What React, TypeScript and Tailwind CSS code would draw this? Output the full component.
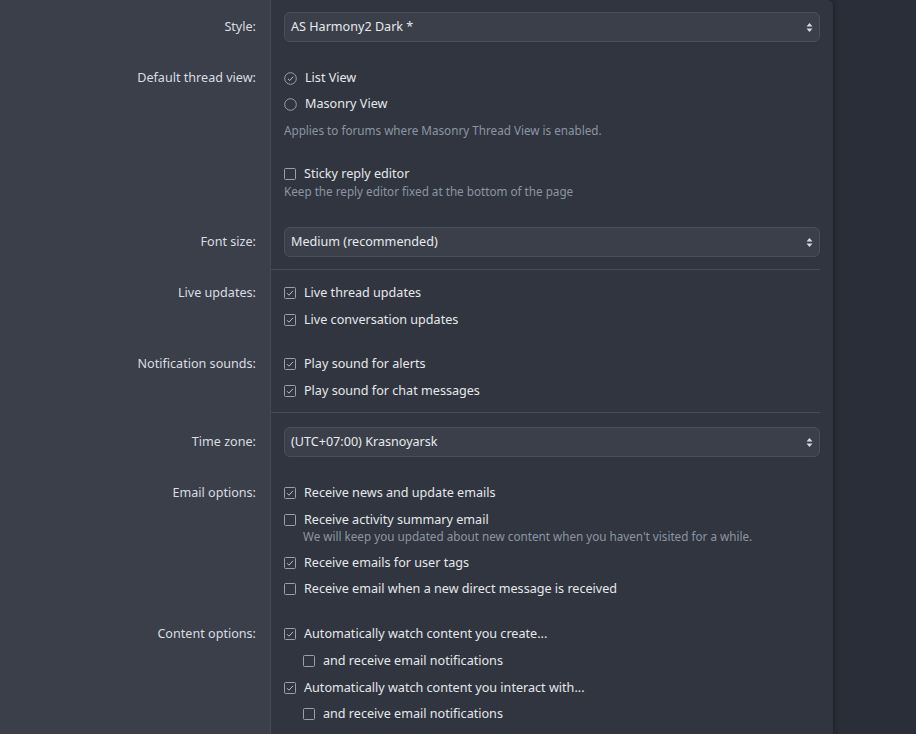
import React from "react";

const font = { fontFamily: '"Noto Sans", "Open Sans", sans-serif' };

function CheckBox({ checked }: { checked: boolean }) {
  return (
    <svg width="12" height="12" viewBox="0 0 12 12" className="shrink-0">
      <rect x="0.5" y="0.5" width="11" height="11" rx="1" fill="none" stroke="#9aa0aa" strokeWidth="1" />
      {checked && <path d="M3 6.2 L5 8.2 L9 3.8" fill="none" stroke="#b8bdc5" strokeWidth="1" />}
    </svg>
  );
}

function Radio({ checked }: { checked: boolean }) {
  return (
    <svg width="13" height="13" viewBox="0 0 13 13" className="shrink-0">
      <circle cx="6.5" cy="6.5" r="5.8" fill="none" stroke="#9aa0aa" strokeWidth="1" />
      {checked && <path d="M3.9 6.7 L5.8 8.5 L9.2 4.7" fill="none" stroke="#b8bdc5" strokeWidth="1" />}
    </svg>
  );
}

function Option({ checked, label, radio, indent }: { checked: boolean; label: string; radio?: boolean; indent?: boolean }) {
  return (
    <div className={"flex items-center h-5 gap-[8px] " + (indent ? "pl-[19px]" : "")}>
      {radio ? <Radio checked={checked} /> : <CheckBox checked={checked} />}
      <span className="text-[12.6px] text-[#e6e8eb]">{label}</span>
    </div>
  );
}

function Hint({ children, className }: { children: React.ReactNode; className?: string }) {
  return <div className={"text-[11.7px] text-[#8d95a3] " + (className || "")}>{children}</div>;
}

function Select({ value }: { value: string }) {
  return (
    <div className="flex items-center justify-between h-[30px] rounded-md border border-[#4a505b] bg-[#3a3f49] pl-[6px] pr-[6px]">
      <span className="text-[12.6px] text-[#e8eaed]">{value}</span>
      <svg width="7" height="11" viewBox="0 0 7 11">
        <path d="M0.5 4.5 L3.5 1 L6.5 4.5 Z" fill="#d8dbe0" />
        <path d="M0.5 6.5 L3.5 10 L6.5 6.5 Z" fill="#d8dbe0" />
      </svg>
    </div>
  );
}

function Row({
  label,
  children,
  pt,
  pb,
  tall,
  sep,
}: {
  label?: string;
  children: React.ReactNode;
  pt: string;
  pb: string;
  tall?: boolean;
  sep?: boolean;
}) {
  return (
    <div className="flex">
      <div className={"w-[271px] shrink-0 bg-[#3a3f49] border-r border-[#444a55] pr-[14px] text-right " + pt}>
        {label && (
          <div className={"text-[12.6px] text-[#dadde2] " + (tall ? "leading-[30px]" : "leading-5")}>{label}</div>
        )}
      </div>
      <div className="flex-1 flex flex-col">
        <div className={"px-[13px] " + pt + " " + pb}>{children}</div>
        {sep && <div className="h-px bg-[#474d58] mr-[13px]" />}
      </div>
    </div>
  );
}

export default function App() {
  return (
    <div className="w-[916px] h-[734px] overflow-hidden bg-[#2a2e38] flex" style={font}>
      <div className="w-[833px] h-full bg-[#30353f] rounded-tr-md shadow-[2px_0_4px_rgba(0,0,0,0.25)] overflow-hidden">
        <Row label="Style:" pt="pt-[12px]" pb="pb-[12px]" tall>
          <Select value="AS Harmony2 Dark *" />
        </Row>
        <Row label="Default thread view:" pt="pt-[14px]" pb="pb-[13px]">
          <div className="flex flex-col gap-[6px]">
            <Option radio checked label="List View" />
            <Option radio checked={false} label="Masonry View" />
          </div>
          <Hint className="mt-[7px] leading-[18px]">Applies to forums where Masonry Thread View is enabled.</Hint>
          <div className="mt-[25px]">
            <Option checked={false} label="Sticky reply editor" />
            <Hint className="leading-[14px] mb-[2px]">Keep the reply editor fixed at the bottom of the page</Hint>
          </div>
        </Row>
        <Row label="Font size:" pt="pt-[14px]" pb="pb-[12px]" tall sep>
          <Select value="Medium (recommended)" />
        </Row>
        <Row label="Live updates:" pt="pt-[13px]" pb="pb-[11px]">
          <div className="flex flex-col gap-[7px]">
            <Option checked label="Live thread updates" />
            <Option checked label="Live conversation updates" />
          </div>
        </Row>
        <Row label="Notification sounds:" pt="pt-[13px]" pb="pb-[11px]" sep>
          <div className="flex flex-col gap-[7px]">
            <Option checked label="Play sound for alerts" />
            <Option checked label="Play sound for chat messages" />
          </div>
        </Row>
        <Row label="Time zone:" pt="pt-[14px]" pb="pb-[12px]" tall>
          <Select value="(UTC+07:00) Krasnoyarsk" />
        </Row>
        <Row label="Email options:" pt="pt-[14px]" pb="pb-[11px]">
          <div className="flex flex-col gap-[7px]">
            <Option checked label="Receive news and update emails" />
            <div>
              <Option checked={false} label="Receive activity summary email" />
              <Hint className="pl-[19px] leading-[13px] mb-[3px]">
                We will keep you updated about new content when you haven't visited for a while.
              </Hint>
            </div>
            <Option checked label="Receive emails for user tags" />
            <div className="-mt-[1px]">
              <Option checked={false} label="Receive email when a new direct message is received" />
            </div>
          </div>
        </Row>
        <Row label="Content options:" pt="pt-[14px]" pb="pb-[12px]">
          <div className="flex flex-col gap-[7px]">
            <Option checked label="Automatically watch content you create..." />
            <Option indent checked={false} label="and receive email notifications" />
            <Option checked label="Automatically watch content you interact with..." />
            <div className="-mt-[1px]">
              <Option indent checked={false} label="and receive email notifications" />
            </div>
          </div>
        </Row>
      </div>
    </div>
  );
}
